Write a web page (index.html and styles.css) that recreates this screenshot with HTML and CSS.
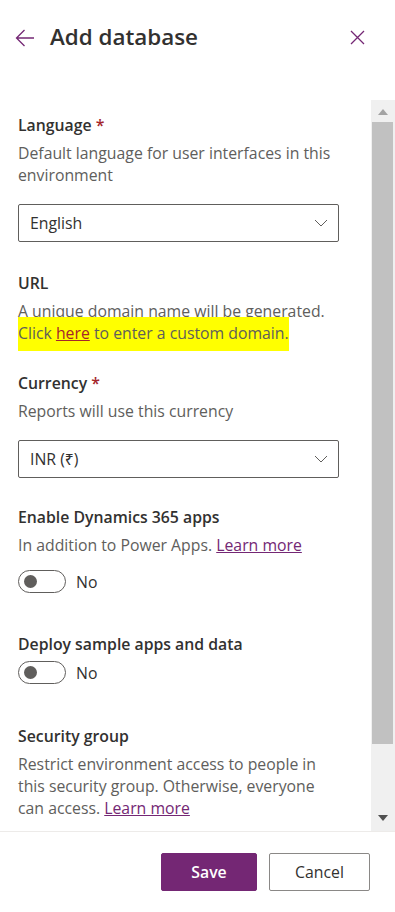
FILE: index.html
```html
<!DOCTYPE html>
<html lang="en">
<head>
    <meta charset="UTF-8">
    <meta name="viewport" content="width=device-width, initial-scale=1.0">
    <title>Add database</title>
    <link rel="stylesheet" href="styles.css">
</head>
<body>
    <div class="panel">
        <div class="panel-header">
            <button class="icon-button back" aria-label="Back">
                <svg width="20" height="18" viewBox="0 0 20 18"><path d="M19 9H1.5M9.5 1L1.5 9l8 8" fill="none" stroke="#742774" stroke-width="1.3"/></svg>
            </button>
            <h1 class="title">Add database</h1>
            <button class="icon-button close" aria-label="Close">
                <svg width="15" height="15" viewBox="0 0 15 15"><path d="M1 1l13 13M14 1L1 14" fill="none" stroke="#742774" stroke-width="1.3"/></svg>
            </button>
        </div>

        <div class="panel-body">
            <div class="content">
                <div class="field field-language">
                    <div class="field-label">Language <span class="required">*</span></div>
                    <div class="hint">Default language for user interfaces in this environment</div>
                    <div class="dropdown">
                        <span>English</span>
                        <svg class="chevron" width="14" height="8" viewBox="0 0 14 8"><path d="M1 1l6 6 6-6" fill="none" stroke="#605e5c" stroke-width="1"/></svg>
                    </div>
                </div>

                <div class="field">
                    <div class="field-label">URL</div>
                    <div class="hint">A unique domain name will be generated. <span class="highlight">Click <a href="#" class="link-here">here</a> to enter a custom domain.</span></div>
                </div>

                <div class="field">
                    <div class="field-label">Currency <span class="required">*</span></div>
                    <div class="hint">Reports will use this currency</div>
                    <div class="dropdown">
                        <span>INR (₹)</span>
                        <svg class="chevron" width="14" height="8" viewBox="0 0 14 8"><path d="M1 1l6 6 6-6" fill="none" stroke="#605e5c" stroke-width="1"/></svg>
                    </div>
                </div>

                <div class="field toggle-field">
                    <div class="field-label">Enable Dynamics 365 apps</div>
                    <div class="hint">In addition to Power Apps. <a href="#" class="link">Learn more</a></div>
                    <div class="toggle-row">
                        <span class="toggle"><span class="knob"></span></span>
                        <span class="toggle-text">No</span>
                    </div>
                </div>

                <div class="field toggle-field field-sample">
                    <div class="field-label">Deploy sample apps and data</div>
                    <div class="toggle-row">
                        <span class="toggle"><span class="knob"></span></span>
                        <span class="toggle-text">No</span>
                    </div>
                </div>

                <div class="field">
                    <div class="field-label">Security group</div>
                    <div class="hint">Restrict environment access to people in this security group. Otherwise, everyone can access. <a href="#" class="link">Learn more</a></div>
                </div>
            </div>

            <div class="scrollbar">
                <span class="arrow up"></span>
                <div class="track"><div class="thumb"></div></div>
                <span class="arrow down"></span>
            </div>
        </div>

        <div class="panel-footer">
            <button class="btn btn-primary">Save</button>
            <button class="btn btn-default">Cancel</button>
        </div>
    </div>
</body>
</html>
```

FILE: styles.css
```css
body {
    margin: 0;
    font-family: "Open Sans", "Noto Sans", sans-serif;
    background: white;
    color: #323130;
}
.panel {
    display: flex;
    flex-direction: column;
    width: 395px;
    height: 912px;
}
.panel-header {
    display: flex;
    align-items: center;
    height: 76px;
    padding: 0 30px 0 15px;
    flex-shrink: 0;
    margin-bottom: 24px;
}
.icon-button {
    background: none;
    border: none;
    padding: 0;
    display: flex;
    cursor: pointer;
}
.title {
    flex: 1;
    margin: 0 0 0 15px;
    font-size: 22.4px;
    font-weight: 600;
    color: #323130;
    padding-bottom: 3px;
}
.close {
    margin-bottom: 2px;
}
.panel-body {
    display: flex;
    flex: 1;
    min-height: 0;
}
.content {
    flex: 1;
    overflow: hidden;
    padding: 14px 32px 0 18px;
    font-size: 15.8px;
    line-height: 22px;
}
.field {
    margin-bottom: 28px;
}
.field-language {
    margin-bottom: 30px;
}
.field-label {
    font-weight: 600;
    color: #323130;
    margin-bottom: 6px;
}
.required {
    color: #a4262c;
}
.hint {
    color: #605e5c;
}
.highlight {
    background: #ffff00;
    padding: 5px 0 7px;
}
.link-here {
    color: #a4262c;
}
.link {
    color: #742774;
}
.dropdown {
    display: flex;
    align-items: center;
    justify-content: space-between;
    height: 36px;
    margin-top: 18px;
    padding: 0 10px 0 11px;
    border: 1px solid #605e5c;
    border-radius: 2px;
    color: #323130;
}
.toggle-field {
    margin-bottom: 40px;
}
.field-sample {
    margin-bottom: 41px;
}
.toggle-row {
    display: flex;
    align-items: center;
    margin-top: 14px;
}
.field-label + .toggle-row {
    margin-top: 2px;
}
.toggle {
    display: flex;
    align-items: center;
    width: 46px;
    height: 21px;
    border: 1px solid #605e5c;
    border-radius: 12px;
}
.knob {
    width: 13px;
    height: 13px;
    margin-left: 5px;
    border-radius: 50%;
    background: #605e5c;
}
.toggle-text {
    margin-left: 10px;
    color: #323130;
}
.scrollbar {
    display: flex;
    flex-direction: column;
    align-items: center;
    width: 21px;
    background: #f0f0f0;
    flex-shrink: 0;
    padding: 0 2px 0 1px;
}
.arrow {
    width: 0;
    height: 0;
    border-left: 5px solid transparent;
    border-right: 5px solid transparent;
    flex-shrink: 0;
}
.arrow.up {
    margin: 9px 0 7px;
    border-bottom: 6px solid #a3a3a3;
}
.arrow.down {
    margin: 6px 0 10px;
    border-top: 6px solid #505050;
}
.track {
    flex: 1;
    align-self: stretch;
}
.thumb {
    height: 622px;
    background: #c1c1c1;
}
.panel-footer {
    display: flex;
    justify-content: flex-end;
    gap: 12px;
    height: 81px;
    padding: 21px 25px 0 0;
    border-top: 1px solid #edebe9;
    box-sizing: border-box;
    flex-shrink: 0;
}
.btn {
    height: 38px;
    font-family: inherit;
    font-size: 15.8px;
    font-weight: 600;
    border-radius: 2px;
    cursor: pointer;
}
.btn-primary {
    width: 96px;
    background: #742774;
    border: 1px solid #742774;
    color: white;
}
.btn-default {
    width: 101px;
    background: white;
    border: 1px solid #8a8886;
    color: #323130;
    font-weight: 400;
}
```
